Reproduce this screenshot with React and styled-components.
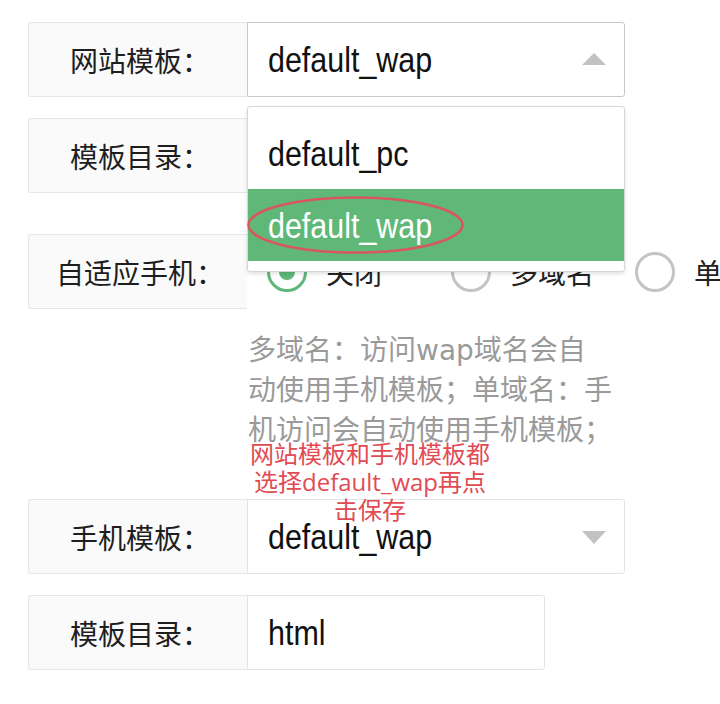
import React from "react";
import styled, { createGlobalStyle } from "styled-components";

const GlobalStyle = createGlobalStyle`
  html, body {
    margin: 0;
    padding: 0;
    background: #ffffff;
    overflow: hidden;
  }
  body {
    font-family: "Liberation Sans", "Noto Sans CJK SC", sans-serif;
    color: #222;
  }
  * { box-sizing: border-box; }
`;

const Page = styled.div`
  position: relative;
  width: 720px;
  height: 704px;
  overflow: hidden;
  padding: 22px 0 0 28px;
`;

const FormItem = styled.div`
  display: flex;
  align-items: center;
  height: 75px;
  margin-bottom: ${(p) => p.$mb ?? 21}px;
`;

const Label = styled.div`
  flex: 0 0 219px;
  height: 100%;
  display: flex;
  align-items: center;
  justify-content: center;
  background: #fafafa;
  border: 1px solid #e6e6e6;
  border-right: none;
  border-radius: 3px 0 0 3px;
  font-family: "Noto Sans CJK SC", sans-serif;
  font-size: 28px;
  color: #1e1e1e;
  padding-left: 4px;
`;

const Field = styled.div`
  position: relative;
  flex: 0 0 ${(p) => p.$w}px;
  height: 100%;
  display: flex;
  align-items: center;
  border: 1px solid ${(p) => (p.$focus ? "#c9c9c9" : "#e3e3e3")};
  border-radius: 0 3px 3px 0;
  padding-left: 20px;
  background: #fff;
`;

/* condensed Latin face, as in the reference */
const Value = styled.span`
  display: inline-block;
  font-family: "Liberation Sans", sans-serif;
  font-size: 35px;
  line-height: 1;
  color: ${(p) => (p.$light ? "#fff" : "#111")};
  transform: scaleX(0.87);
  transform-origin: left center;
  white-space: nowrap;
`;

const Arrow = styled.span`
  position: absolute;
  right: 18px;
  top: 50%;
  width: 0;
  height: 0;
  border-left: 12px solid transparent;
  border-right: 12px solid transparent;
  ${(p) =>
    p.$up
      ? `border-bottom: 12px solid #c2c2c2; margin-top: -7px;`
      : `border-top: 13px solid #c2c2c2; margin-top: -6px;`}
`;

const Dropdown = styled.div`
  position: absolute;
  left: -1px;
  top: 83px;
  width: 378px;
  background: #fff;
  border: 1px solid #d7d7d7;
  border-radius: 3px;
  box-shadow: 0 2px 4px rgba(0, 0, 0, 0.12);
  padding: 10px 0;
  z-index: 10;
`;

const Option = styled.div`
  position: relative;
  height: 72px;
  display: flex;
  align-items: center;
  padding-left: 20px;
  background: ${(p) => (p.$selected ? "#5fb878" : "#fff")};
`;

const Circle = styled.svg`
  position: absolute;
  left: 0;
  top: 0;
  overflow: visible;
  pointer-events: none;
`;

const RadioGroup = styled.div`
  display: flex;
  flex-shrink: 0;
  padding-left: 20px;
  height: 100%;
  align-items: center;
`;

const RadioItem = styled.div`
  flex: 0 0 184px;
  display: flex;
  align-items: center;
  gap: 19px;
  font-family: "Noto Sans CJK SC", sans-serif;
  font-size: 28px;
  color: #222;
  white-space: nowrap;
`;

const HelpRow = styled.div`
  position: relative;
  margin-left: 219px;
  margin-bottom: 48px;
  width: 380px;
  padding-left: 1px;
`;

const Help = styled.div`
  font-family: "DejaVu Sans", "Noto Sans CJK SC", sans-serif;
  font-size: 28px;
  line-height: 40px;
  color: #9a9a9a;
  width: 365px;
`;

const Note = styled.div`
  position: absolute;
  left: 3px;
  top: 109px;
  width: 240px;
  text-align: center;
  font-family: "Open Sans", "Noto Sans CJK SC", sans-serif;
  font-size: 24px;
  line-height: 28px;
  color: #e24b52;
  z-index: 5;
`;

function Radio({ checked, children }) {
  const color = checked ? "#5fb878" : "#c4c4c4";
  return (
    <RadioItem>
      <svg width="40" height="40" viewBox="0 0 40 40">
        <circle cx="20" cy="20" r="18.5" fill="none" stroke={color} strokeWidth="3" />
        {checked && <circle cx="20" cy="20" r="8" fill={color} />}
      </svg>
      <span>{children}</span>
    </RadioItem>
  );
}

export default function App() {
  return (
    <>
      <GlobalStyle />
      <Page>
        <FormItem>
          <Label>网站模板：</Label>
          <Field $w={378} $focus>
            <Value>default_wap</Value>
            <Arrow $up />
            <Dropdown>
              <Option>
                <Value>default_pc</Value>
              </Option>
              <Option $selected>
                <Value $light>default_wap</Value>
                <Circle width="220" height="72">
                  <ellipse
                    cx="107.5"
                    cy="36"
                    rx="107"
                    ry="27.5"
                    fill="none"
                    stroke="#d9575c"
                    strokeWidth="2.5"
                  />
                </Circle>
              </Option>
            </Dropdown>
          </Field>
        </FormItem>

        <FormItem $mb={41}>
          <Label>模板目录：</Label>
          <Field $w={298}>
            <Value>html</Value>
          </Field>
        </FormItem>

        <FormItem $mb={22}>
          <Label>自适应手机：</Label>
          <RadioGroup>
            <Radio checked>关闭</Radio>
            <Radio>多域名</Radio>
            <Radio>单域名</Radio>
          </RadioGroup>
        </FormItem>

        <HelpRow>
          <Help>多域名：访问wap域名会自动使用手机模板；单域名：手机访问会自动使用手机模板；</Help>
          <Note>
            网站模板和手机模板都
            <br />
            选择default_wap再点
            <br />
            击保存
          </Note>
        </HelpRow>

        <FormItem>
          <Label>手机模板：</Label>
          <Field $w={378}>
            <Value>default_wap</Value>
            <Arrow />
          </Field>
        </FormItem>

        <FormItem>
          <Label>模板目录：</Label>
          <Field $w={298}>
            <Value>html</Value>
          </Field>
        </FormItem>
      </Page>
    </>
  );
}
